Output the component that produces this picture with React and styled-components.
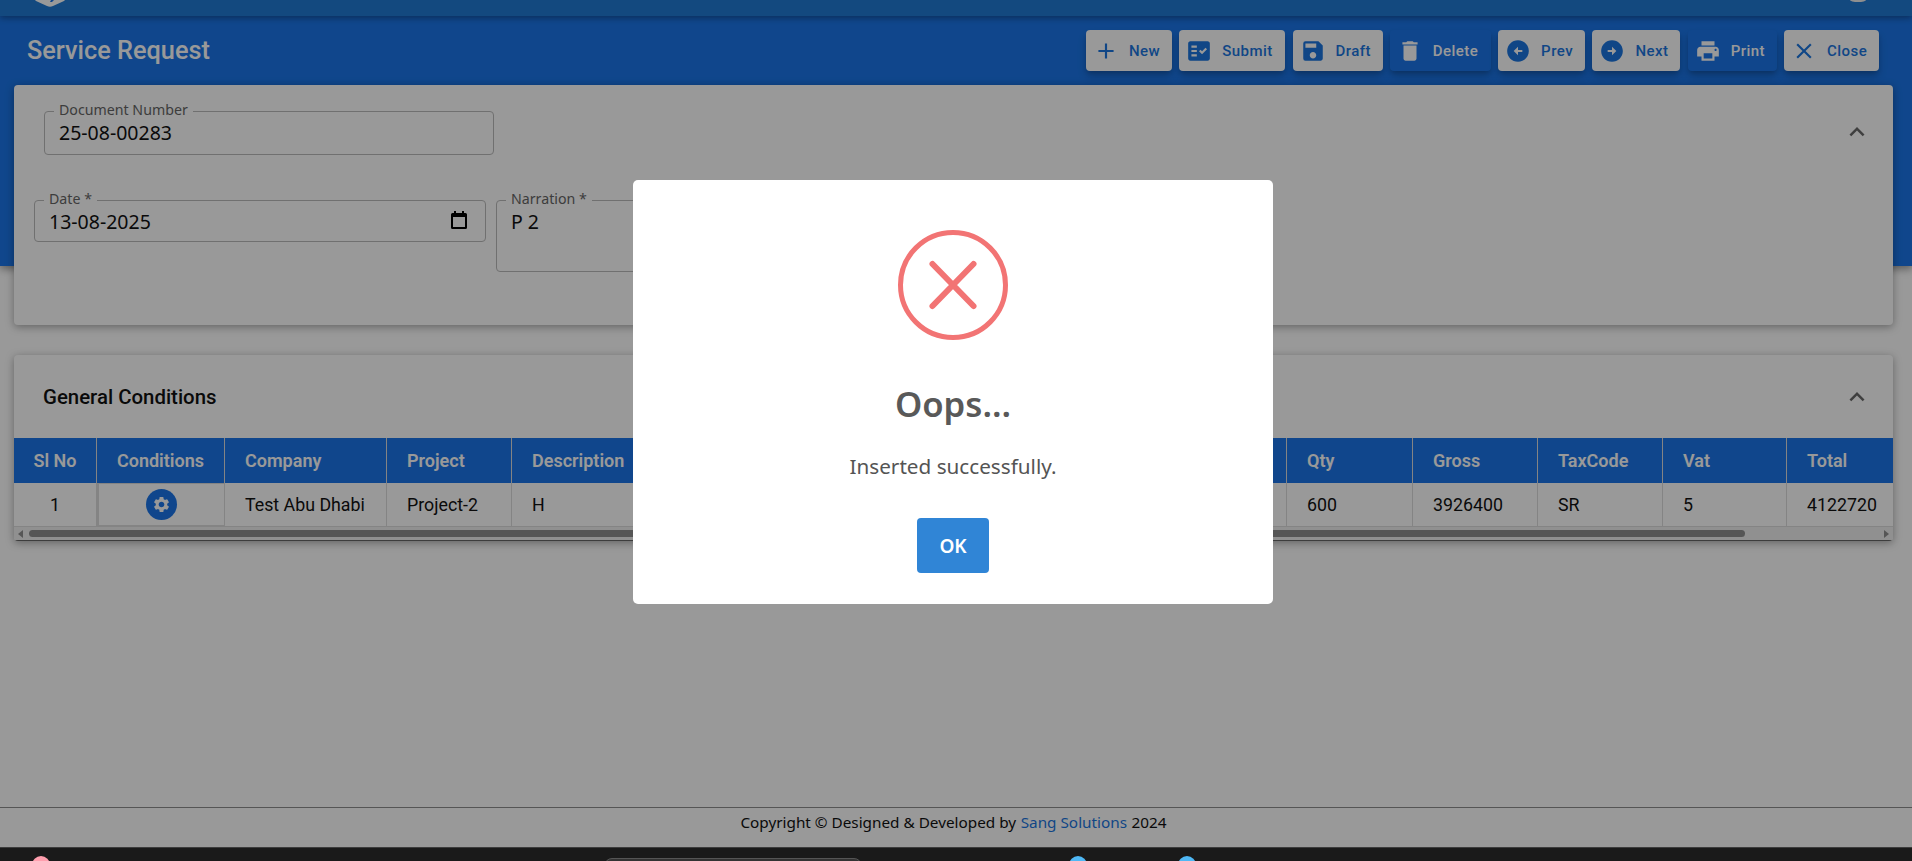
import React from 'react';
import styled, { createGlobalStyle } from 'styled-components';
import {
  MdAdd, MdFactCheck, MdSave, MdDelete, MdArrowCircleLeft, MdArrowCircleRight,
  MdPrint, MdClose, MdExpandLess, MdSettings,
} from 'react-icons/md';

const GRID = '83px 128px 162px 125px 775px 126px 125px 125px 124px 106px';

const actions = [
  { label: 'New', Icon: MdAdd, width: 86 },
  { label: 'Submit', Icon: MdFactCheck, width: 106 },
  { label: 'Draft', Icon: MdSave, width: 90 },
  { label: 'Delete', Icon: MdDelete, width: 101, solid: true },
  { label: 'Prev', Icon: MdArrowCircleLeft, width: 87 },
  { label: 'Next', Icon: MdArrowCircleRight, width: 88 },
  { label: 'Print', Icon: MdPrint, width: 89, solid: true },
  { label: 'Close', Icon: MdClose, width: 95 },
];

const columns = [
  { title: 'Sl No', center: true },
  { title: 'Conditions', center: true },
  { title: 'Company' },
  { title: 'Project' },
  { title: 'Description' },
  { title: 'Qty' },
  { title: 'Gross' },
  { title: 'TaxCode' },
  { title: 'Vat' },
  { title: 'Total' },
];

const row = ['1', null, 'Test Abu Dhabi', 'Project-2', 'H', '600', '3926400', 'SR', '5', '4122720'];

const App = () => {
  return (
    <Screen>
      <GlobalStyle />
      <Browser>
        <TopBar>
          <Logo viewBox="0 0 30 7">
            <path d="M0 0h30l-1 1-11 5q-3 1.500-6 0L1 1z" fill="#fff" />
            <path d="M16 0h3l-2 2h-2z" fill="#1b76e9" />
          </Logo>
          <Avatar />
        </TopBar>
        <Band>
          <Title>Service Request</Title>
          <Toolbar>
            {actions.map(({ label, Icon, width, solid }) => (
              <ActionButton key={label} $width={width} $solid={solid}>
                <Icon size={26} />
                <span>{label}</span>
              </ActionButton>
            ))}
          </Toolbar>
        </Band>
        <Content>
          <DocumentCard>
            <DocumentRow>
              <Field $width={450}>
                <legend>Document Number</legend>
                <FieldValue>25-08-00283</FieldValue>
              </Field>
              <DocumentChevron size={30} />
            </DocumentRow>
            <FieldRow>
              <Field $width={452} $height={52}>
                <legend>Date *</legend>
                <FieldValue>13-08-2025</FieldValue>
                <CalendarIcon viewBox="0 0 16 18">
                  <path d="M3 0h2v2h6V0h2v2h1.500A1.500 1.500 0 0 1 16 3.500v13a1.500 1.500 0 0 1-1.500 1.500h-13A1.500 1.500 0 0 1 0 16.500v-13A1.500 1.500 0 0 1 1.500 2H3zM2 6v10h12V6z" fill="#000" />
                </CalendarIcon>
              </Field>
              <Field $width={700} $height={82}>
                <legend>Narration *</legend>
                <FieldValue>P 2</FieldValue>
              </Field>
            </FieldRow>
          </DocumentCard>
          <ConditionsCard>
            <CardHeader>
              <CardTitle>General Conditions</CardTitle>
              <Chevron size={30} />
            </CardHeader>
            <HeadRow>
              {columns.map((col) => (
                <HeadCell key={col.title} $center={col.center}>{col.title}</HeadCell>
              ))}
            </HeadRow>
            <BodyRow>
              {row.map((value, i) => (
                value === null ? (
                  <ActionCell key={i}>
                    <GearButton><MdSettings size={19} /></GearButton>
                  </ActionCell>
                ) : (
                  <BodyCell key={i} $center={columns[i].center}>{value}</BodyCell>
                )
              ))}
            </BodyRow>
            <ScrollTrack>
              <ScrollArrow $dir="left" />
              <ScrollThumb />
              <ScrollArrow $dir="right" />
            </ScrollTrack>
          </ConditionsCard>
        </Content>
        <Footer>
          Copyright © Designed &amp; Developed by <FooterLink>Sang Solutions</FooterLink> 2024
        </Footer>
        <Overlay>
          <Modal>
            <ErrorIcon viewBox="0 0 110 110">
              <circle cx="55" cy="55" r="52.500" fill="none" stroke="#f27474" strokeWidth="5" />
              <path d="M34.500 34l41 42M75.500 34L34.500 76" stroke="#f27474" strokeWidth="6" strokeLinecap="round" />
            </ErrorIcon>
            <ModalTitle>Oops...</ModalTitle>
            <ModalText>Inserted successfully.</ModalText>
            <OkButton>OK</OkButton>
          </Modal>
        </Overlay>
      </Browser>
      <Taskbar>
        <TrayDot $color="#ff9fae" $left={32} />
        <TaskTab />
        <TrayDot $color="#4fb8f5" $left={207} />
        <TrayDot $color="#4fb8f5" $left={91} />
      </Taskbar>
    </Screen>
  );
};

export default App;

const GlobalStyle = createGlobalStyle`
  html, body {
    margin: 0;
    height: 100%;
    overflow: hidden;
  }
  * {
    box-sizing: border-box;
  }
`;

const Screen = styled.div`
  display: flex;
  flex-direction: column;
  height: 861px;
  background: #fff;
  font-family: Roboto, "Liberation Sans", sans-serif;
`;

const Browser = styled.div`
  position: relative;
  flex: 1;
  display: flex;
  flex-direction: column;
  min-height: 0;
`;

const TopBar = styled.header`
  position: relative;
  z-index: 1;
  height: 16px;
  flex-shrink: 0;
  display: flex;
  justify-content: space-between;
  padding: 0 46px 0 35px;
  background: #217ad4;
  box-shadow: 0 2px 6px rgba(0, 0, 0, 0.35);
`;

const Logo = styled.svg`
  width: 30px;
  height: 7px;
`;

const Avatar = styled.div`
  width: 16px;
  height: 2px;
  border-radius: 0 0 50% 50% / 0 0 100% 100%;
  background: #eee;
`;

const Band = styled.section`
  height: 250px;
  flex-shrink: 0;
  display: flex;
  justify-content: space-between;
  align-items: flex-start;
  padding: 14px 33px 0 27px;
  background: #1b76e9;
  box-shadow: 0 3px 8px rgba(0, 0, 0, 0.4);
`;

const Title = styled.h1`
  margin: 0;
  font-size: 25.300px;
  font-weight: 500;
  line-height: 41px;
  color: #fff;
`;

const Toolbar = styled.div`
  display: flex;
  gap: 7.300px;
`;

const ActionButton = styled.button`
  width: ${(p) => p.$width}px;
  height: 41px;
  display: flex;
  align-items: center;
  gap: 10px;
  padding: 0 0 0 7px;
  border: 0;
  border-radius: 4px;
  background: ${(p) => (p.$solid ? '#1b76e9' : '#fff')};
  color: ${(p) => (p.$solid ? '#fff' : '#1b76e0')};
  font-family: inherit;
  font-size: 15px;
  font-weight: 500;
  letter-spacing: 0.450px;
  box-shadow: 0 3px 5px -1px rgba(0, 0, 0, 0.2), 0 6px 10px 0 rgba(0, 0, 0, 0.14);
`;

const Content = styled.main`
  position: relative;
  display: flex;
  flex-direction: column;
  gap: 30px;
  margin-top: -181px;
  padding: 0 19px 0 14px;
`;

const DocumentCard = styled.section`
  height: 240px;
  padding: 16px 21px 0 20px;
  border-radius: 4px;
  background: #fff;
  box-shadow: 0 2px 8px rgba(0, 0, 0, 0.35);
`;

const DocumentRow = styled.div`
  display: flex;
  justify-content: space-between;
  align-items: center;
  padding-left: 10px;
`;

const FieldRow = styled.div`
  display: flex;
  align-items: flex-start;
  gap: 10px;
  margin-top: 35px;
`;

const Field = styled.fieldset`
  position: relative;
  width: ${(p) => p.$width}px;
  height: ${(p) => p.$height || 54}px;
  margin: 0;
  padding: 0 14px;
  border: 1px solid #bbb;
  border-radius: 4px;
  font-family: "Noto Sans", "Open Sans", sans-serif;

  legend {
    position: relative;
    top: -1px;
    margin-left: -5px;
    padding: 0 5px;
    font-size: 14.200px;
    line-height: 20px;
    color: #666;
  }
`;

const FieldValue = styled.div`
  font-size: 19.500px;
  line-height: 24px;
  color: #111;
`;

const CalendarIcon = styled.svg`
  position: absolute;
  right: 18px;
  top: 1px;
  width: 16px;
  height: 18px;
`;

const Chevron = styled(MdExpandLess)`
  flex-shrink: 0;
  color: #6a6a6a;
`;

const DocumentChevron = styled(Chevron)`
  margin-top: 8px;
`;

const ConditionsCard = styled.section`
  border-radius: 4px;
  background: #fff;
  overflow: hidden;
  box-shadow: 0 2px 8px rgba(0, 0, 0, 0.35);
`;

const CardHeader = styled.div`
  height: 83px;
  display: flex;
  justify-content: space-between;
  align-items: center;
  padding: 0 21px 0 29px;
`;

const CardTitle = styled.h2`
  margin: 0;
  font-size: 20.400px;
  font-weight: 500;
  color: #111;
`;

const HeadRow = styled.div`
  display: grid;
  grid-template-columns: ${GRID};
  height: 45px;
  background: #1b76e9;
`;

const HeadCell = styled.div`
  display: flex;
  align-items: center;
  justify-content: ${(p) => (p.$center ? 'center' : 'flex-start')};
  padding-left: ${(p) => (p.$center ? 0 : 20)}px;
  border-right: 1px solid #ddd;
  font-size: 18px;
  font-weight: 600;
  color: #fff;

  &:last-child {
    border-right: 0;
  }
`;

const BodyRow = styled.div`
  display: grid;
  grid-template-columns: ${GRID};
  height: 44px;
  border-bottom: 1px solid #ddd;
`;

const BodyCell = styled.div`
  display: flex;
  align-items: center;
  justify-content: ${(p) => (p.$center ? 'center' : 'flex-start')};
  padding-left: ${(p) => (p.$center ? 0 : 20)}px;
  border-right: 1px solid #ddd;
  font-size: 17.800px;
  color: #111;

  &:last-child {
    border-right: 0;
  }
`;

const ActionCell = styled(BodyCell)`
  justify-content: center;
  padding: 0;
  border: 1px solid #ddd;
  border-left-width: 2px;
`;

const GearButton = styled.div`
  width: 31px;
  height: 31px;
  display: flex;
  align-items: center;
  justify-content: center;
  border-radius: 50%;
  background: #1b76e9;
  color: #fff;
`;

const ScrollTrack = styled.div`
  height: 14px;
  display: flex;
  align-items: center;
  gap: 2px;
  padding: 0 4px;
  background: #f1f1f1;
  border-bottom: 1px solid #666;
`;

const ScrollArrow = styled.div`
  flex-shrink: 0;
  width: 0;
  height: 0;
  border-top: 4px solid transparent;
  border-bottom: 4px solid transparent;
  border-${(p) => (p.$dir === 'left' ? 'right' : 'left')}: 5px solid #8f8f8f;
`;

const ScrollThumb = styled.div`
  flex: 0 0 1716px;
  margin: 0 auto 0 4px;
  height: 7px;
  border-radius: 4px;
  background: #8f8f8f;
`;

const Footer = styled.footer`
  height: 40px;
  margin-top: auto;
  display: flex;
  align-items: center;
  justify-content: center;
  gap: 0.300em;
  padding: 0 5px 11px 0;
  border-top: 1px solid #8e8e8e;
  font-family: "Noto Sans", "Open Sans", sans-serif;
  font-size: 15.300px;
  color: #111;
`;

const FooterLink = styled.span`
  color: #1b76e0;
`;

const Overlay = styled.div`
  position: absolute;
  inset: 0;
  z-index: 5;
  display: flex;
  justify-content: center;
  align-items: flex-start;
  padding: 180px 6px 0 0;
  background: rgba(0, 0, 0, 0.4);
`;

const Modal = styled.div`
  width: 640px;
  height: 424px;
  display: flex;
  flex-direction: column;
  align-items: center;
  padding-top: 50px;
  border-radius: 5px;
  background: #fff;
  font-family: "Noto Sans", "Open Sans", sans-serif;
`;

const ErrorIcon = styled.svg`
  width: 110px;
  height: 110px;
  flex-shrink: 0;
`;

const ModalTitle = styled.h2`
  margin: 42px 0 0;
  font-size: 34.700px;
  line-height: 44px;
  font-weight: 600;
  color: #595959;
`;

const ModalText = styled.p`
  margin: 26px 0 0;
  font-size: 20.700px;
  line-height: 28px;
  color: #545454;
`;

const OkButton = styled.button`
  width: 72px;
  height: 55px;
  margin-top: 38px;
  border: 0;
  border-radius: 4px;
  background: #3085d6;
  color: #fff;
  font-family: inherit;
  font-size: 19px;
  font-weight: 600;
`;

const Taskbar = styled.div`
  height: 14px;
  flex-shrink: 0;
  display: flex;
  overflow: hidden;
  border-top: 1px solid #3d3d3d;
  background: #1a1a1a;
`;

const TrayDot = styled.div`
  flex-shrink: 0;
  width: 18px;
  height: 18px;
  margin: 8px 0 0 ${(p) => p.$left}px;
  border-radius: 50%;
  background: ${(p) => p.$color};
`;

const TaskTab = styled.div`
  flex-shrink: 0;
  width: 258px;
  height: 20px;
  margin: 10px 0 0 554px;
  border: 1px solid #555;
  border-radius: 8px;
  background: #333;
`;
